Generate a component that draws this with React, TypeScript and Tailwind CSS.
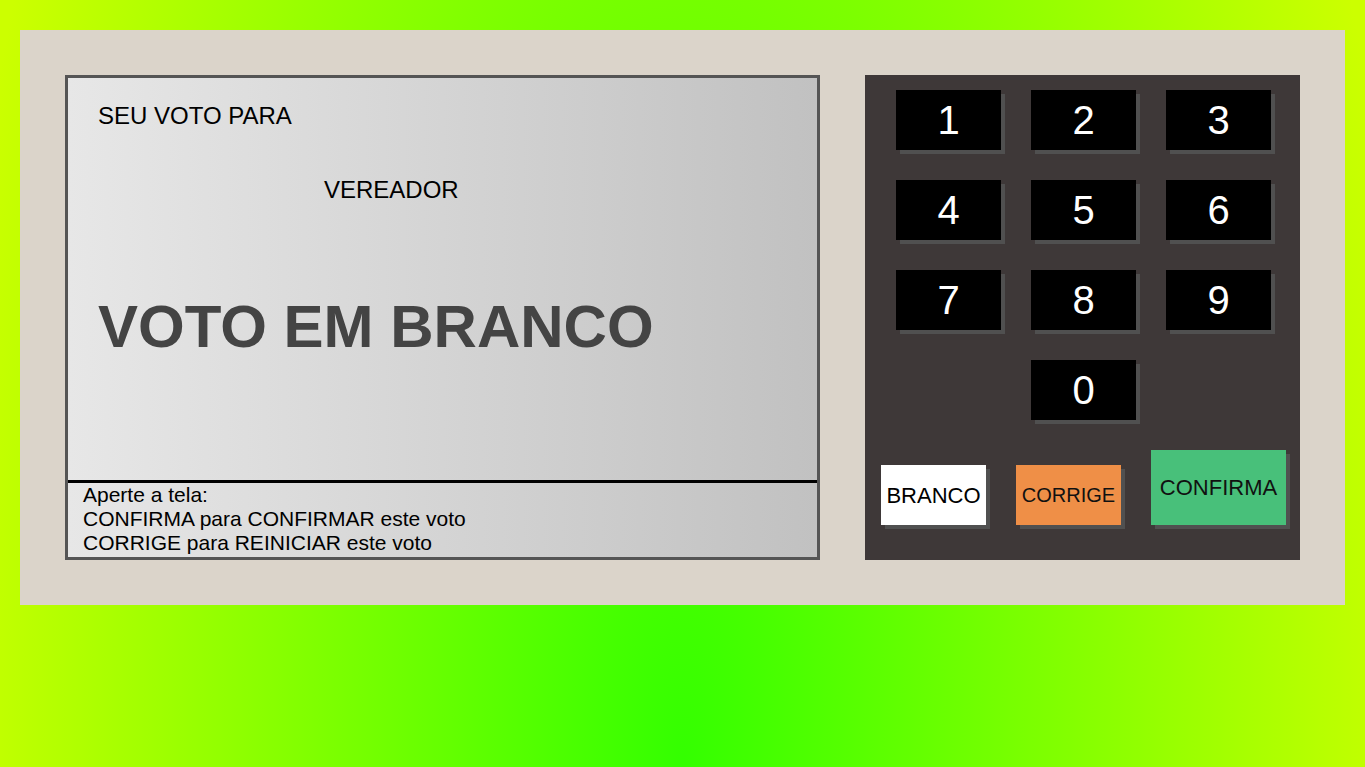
import React from 'react';

const keys = ['1', '2', '3', '4', '5', '6', '7', '8', '9'];

const Key = ({ n }: { n: string }) => (
  <div className="w-[105px] h-[60px] bg-black text-white text-[40px] flex items-center justify-center shadow-[4px_4px_0_#505050]">
    {n}
  </div>
);

const App = () => {
  return (
    <div
      className="min-h-screen w-full pt-[30px] px-[20px] bg-[radial-gradient(ellipse_740px_1800px_at_50%_100%,#33ff00,#ccff00)]"
      style={{ fontFamily: '"Liberation Sans", Arial, sans-serif' }}
    >
      <div className="bg-[#dbd4ca] p-[45px] flex gap-[45px]">
        {/* tela */}
        <div className="w-[755px] h-[485px] border-[3px] border-[#555] flex flex-col bg-[linear-gradient(to_right,#e7e7e7,#c1c1c1)]">
          <div className="flex-1 flex flex-col pl-[30px] pt-[24px]">
            <div className="text-[24px] leading-[28px] text-black">SEU VOTO PARA</div>
            <div className="text-[24px] leading-[28px] text-black mt-[46px] pl-[226px]">VEREADOR</div>
            <div className="text-[60px] leading-[69px] font-bold text-[#444] mt-[88px]">VOTO EM BRANCO</div>
          </div>
          <div className="h-[77px] border-t-[3px] border-black pl-[15px] text-[21px] leading-[24px] text-black">
            <div>Aperte a tela:</div>
            <div>CONFIRMA para CONFIRMAR este voto</div>
            <div>CORRIGE para REINICIAR este voto</div>
          </div>
        </div>

        {/* teclado */}
        <div className="w-[435px] h-[485px] bg-[#3e3838] pt-[15px] pl-[2px] flex flex-col items-center">
          <div className="grid grid-cols-[repeat(3,105px)] auto-rows-[60px] gap-[30px]">
            {keys.map((k) => (
              <Key key={k} n={k} />
            ))}
            <div className="col-start-2">
              <Key n="0" />
            </div>
          </div>
          <div className="mt-[30px] flex items-end gap-[30px]">
            <div className="w-[105px] h-[60px] bg-white text-black text-[22px] flex items-center justify-center shadow-[4px_4px_0_#505050]">
              BRANCO
            </div>
            <div className="w-[105px] h-[60px] bg-[#ef8f47] text-[#111] text-[20px] flex items-center justify-center shadow-[4px_4px_0_#505050]">
              CORRIGE
            </div>
            <div className="w-[135px] h-[75px] bg-[#48c07a] text-[#111] text-[22px] flex items-center justify-center shadow-[4px_4px_0_#505050]">
              CONFIRMA
            </div>
          </div>
        </div>
      </div>
    </div>
  );
};

export default App;
